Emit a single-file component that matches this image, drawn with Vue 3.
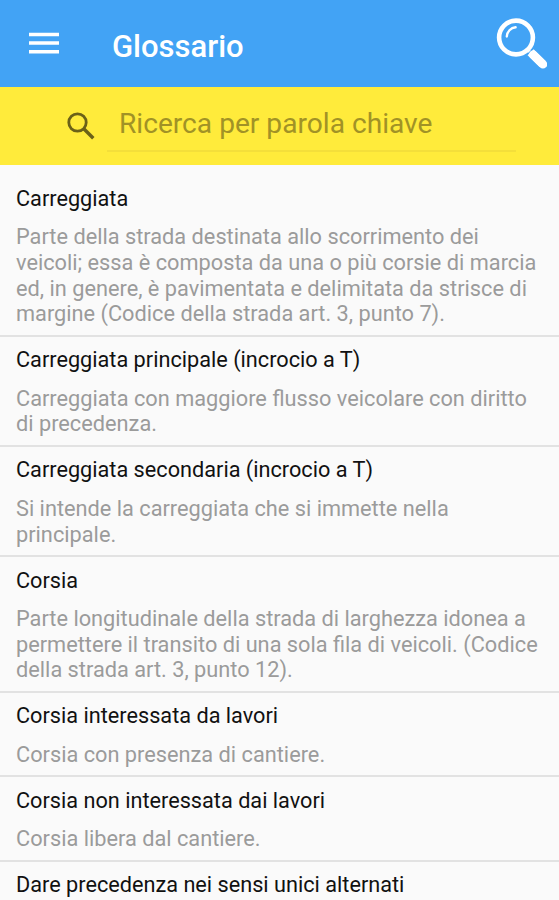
<script setup>
const entries = [
  {
    term: 'Carreggiata',
    text: 'Parte della strada destinata allo scorrimento dei\nveicoli; essa è composta da una o più corsie di marcia\ned, in genere, è pavimentata e delimitata da strisce di\nmargine (Codice della strada art. 3, punto 7).',
  },
  {
    term: 'Carreggiata principale (incrocio a T)',
    text: 'Carreggiata con maggiore flusso veicolare con diritto\ndi precedenza.',
  },
  {
    term: 'Carreggiata secondaria (incrocio a T)',
    text: 'Si intende la carreggiata che si immette nella\nprincipale.',
  },
  {
    term: 'Corsia',
    text: 'Parte longitudinale della strada di larghezza idonea a\npermettere il transito di una sola fila di veicoli. (Codice\ndella strada art. 3, punto 12).',
  },
  { term: 'Corsia interessata da lavori', text: 'Corsia con presenza di cantiere.' },
  { term: 'Corsia non interessata dai lavori', text: 'Corsia libera dal cantiere.' },
  { term: 'Dare precedenza nei sensi unici alternati', text: '' },
]
</script>

<template>
  <div class="screen">
    <header class="toolbar">
      <svg class="menu" width="30" height="24" viewBox="0 0 30 24" aria-hidden="true">
        <path d="M0 3.6h30M0 12h30M0 20.7h30" stroke="#fff" stroke-width="3.5" />
      </svg>
      <h1>Glossario</h1>
      <svg class="lens" width="56" height="56" viewBox="0 0 56 56" fill="none" stroke="#fff" aria-hidden="true">
        <circle cx="25" cy="24.5" r="16.9" stroke-width="4.6" />
        <path d="M15.8 23.5C16 18.6 19.8 14.8 24.6 14.3" stroke-width="2.4" stroke-linecap="round" />
        <path d="M38.5 38.5L36.9 36.9" stroke-width="3.4" />
        <path d="M39.6 39.2L51.6 51" stroke-width="8.6" />
        <path d="M42.2 41.8L51.9 51.3" stroke-width="8.6" stroke-linecap="round" />
      </svg>
    </header>
    <div class="search">
      <svg width="28" height="28" viewBox="0 0 28 28" fill="none" stroke="#6b6118" stroke-width="2.8" aria-hidden="true">
        <circle cx="10.5" cy="10.5" r="8.7" />
        <path d="M16.8 16.8L26.3 26.2" stroke-width="3.5" />
      </svg>
      <div class="field">Ricerca per parola chiave</div>
    </div>
    <main class="list">
      <article v-for="entry in entries" :key="entry.term" class="entry">
        <h2>{{ entry.term }}</h2>
        <p>{{ entry.text }}</p>
      </article>
    </main>
  </div>
</template>

<style>
body {
  margin: 0;
  background: #fafafa;
}
</style>

<style scoped>
.screen {
  height: 900px;
  overflow: hidden;
  background: #fafafa;
  font-family: Roboto, "Liberation Sans", sans-serif;
}
.toolbar {
  display: flex;
  align-items: flex-start;
  box-sizing: border-box;
  height: 87px;
  padding: 0 12px 0 29px;
  background: #42a3f5;
  color: #fff;
}
.menu {
  margin-top: 31px;
}
h1 {
  flex: 1;
  margin: 29px 0 0 53px;
  font-size: 31px;
  line-height: 36px;
  font-weight: 500;
}
.lens {
  margin-top: 13px;
}
.search {
  display: flex;
  box-sizing: border-box;
  height: 78px;
  padding: 0 43px 0 67px;
  background: #ffeb3b;
}
.search svg {
  flex: none;
  margin-top: 25px;
}
.field {
  flex: 1;
  box-sizing: border-box;
  height: 65px;
  margin-left: 12px;
  padding: 20px 0 0 12px;
  border-bottom: 2px solid #f4df3a;
  color: #a19226;
  font-size: 28.15px;
  line-height: 34px;
  white-space: nowrap;
}
.list {
  padding-top: 10.2px;
}
.entry {
  box-sizing: border-box;
  padding: 10.7px 16px 7.7px;
  border-bottom: 2px solid #e2e2e2;
}
h2 {
  margin: 0;
  color: #111;
  font-size: 21.7px;
  line-height: 26px;
  font-weight: 400;
  white-space: nowrap;
}
p {
  margin: 12.6px 0 0;
  color: #9b9b9b;
  font-size: 21.75px;
  line-height: 25.6px;
  white-space: pre;
}
</style>
